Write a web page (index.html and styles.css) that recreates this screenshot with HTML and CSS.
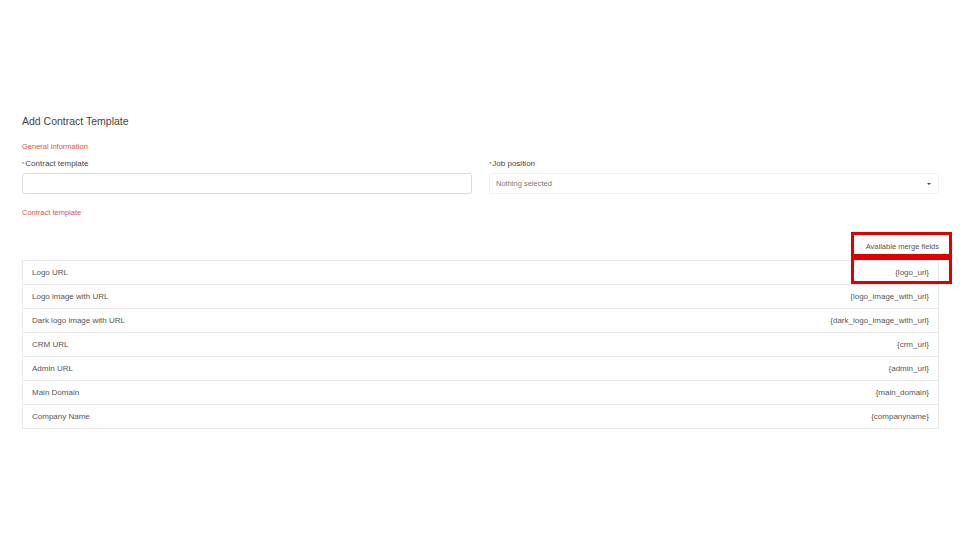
FILE: index.html
```html
<!DOCTYPE html>
<html>
<head>
<meta charset="utf-8">
<link rel="stylesheet" href="styles.css">
</head>
<body>
<div class="page">
  <h1 class="title">Add Contract Template</h1>
  <div class="section-title">General information</div>
  <div class="form-row">
    <div class="field">
      <label class="label"><span class="req">*</span>Contract template</label>
      <div class="input"></div>
    </div>
    <div class="field">
      <label class="label"><span class="req">*</span>Job position</label>
      <div class="select"><span>Nothing selected</span><span class="caret"></span></div>
    </div>
  </div>
  <div class="section-title second">Contract template</div>
  <div class="merge-head">Available merge fields</div>
  <div class="table">
    <div class="row"><span>Logo URL</span><span>{logo_url}</span></div>
    <div class="row"><span>Logo image with URL</span><span>{logo_image_with_url}</span></div>
    <div class="row"><span>Dark logo image with URL</span><span>{dark_logo_image_with_url}</span></div>
    <div class="row"><span>CRM URL</span><span>{crm_url}</span></div>
    <div class="row"><span>Admin URL</span><span>{admin_url}</span></div>
    <div class="row"><span>Main Domain</span><span>{main_domain}</span></div>
    <div class="row"><span>Company Name</span><span>{companyname}</span></div>
  </div>
  <div class="mark mark-1"></div>
  <div class="mark mark-2"></div>
</div>
</body>
</html>
```
FILE: styles.css
```css
* { box-sizing: border-box; }
html, body { margin: 0; padding: 0; background: #fff; }
body {
  font-family: "Liberation Sans", Arial, sans-serif;
  color: #444;
  width: 960px;
  height: 540px;
  overflow: hidden;
}
.page {
  position: relative;
  padding: 114px 21px 0 22px;
}
.title {
  margin: 0;
  font-size: 10.5px;
  font-weight: normal;
  color: #444;
  line-height: 14px;
}
.section-title {
  margin-top: 14px;
  font-size: 7.5px;
  color: #d9534f;
  line-height: 10px;
}
.section-title.second { margin-top: 14px; }
.form-row {
  display: flex;
  gap: 17px;
  margin-top: 6px;
}
.field { flex: 1; }
.label {
  display: block;
  font-size: 8px;
  line-height: 11px;
  color: #444;
}
.req { color: #666; margin-right: 1px; font-size: 6px; }
.input {
  margin-top: 3px;
  height: 21px;
  border: 1px solid #dcdcdc;
  border-radius: 3px;
}
.select {
  margin-top: 3px;
  height: 21px;
  border: 1px solid #f2f2f2;
  border-radius: 3px;
  display: flex;
  align-items: center;
  justify-content: space-between;
  padding: 0 7px 0 6px;
  font-size: 7.5px;
  color: #777;
}
.caret {
  width: 0; height: 0;
  border-left: 2px solid transparent;
  border-right: 2px solid transparent;
  border-top: 2.5px solid #444;
}
.merge-head {
  margin-top: 24px;
  text-align: right;
  font-size: 7.5px;
  color: #555;
  height: 14px;
  line-height: 10px;
}
.table {
  border: 1px solid #e8e8e8;
  border-bottom: none;
  margin-top: 4px;
}
.row {
  display: flex;
  justify-content: space-between;
  align-items: center;
  height: 24px;
  padding: 0 9px;
  border-bottom: 1px solid #e8e8e8;
  font-size: 8px;
  color: #555;
}
.mark {
  position: absolute;
  border: 3px solid #e00000;
  left: 851px;
  width: 101px;
}
.mark-1 { top: 232px; height: 25px; }
.mark-2 { top: 257px; height: 27px; }
```
